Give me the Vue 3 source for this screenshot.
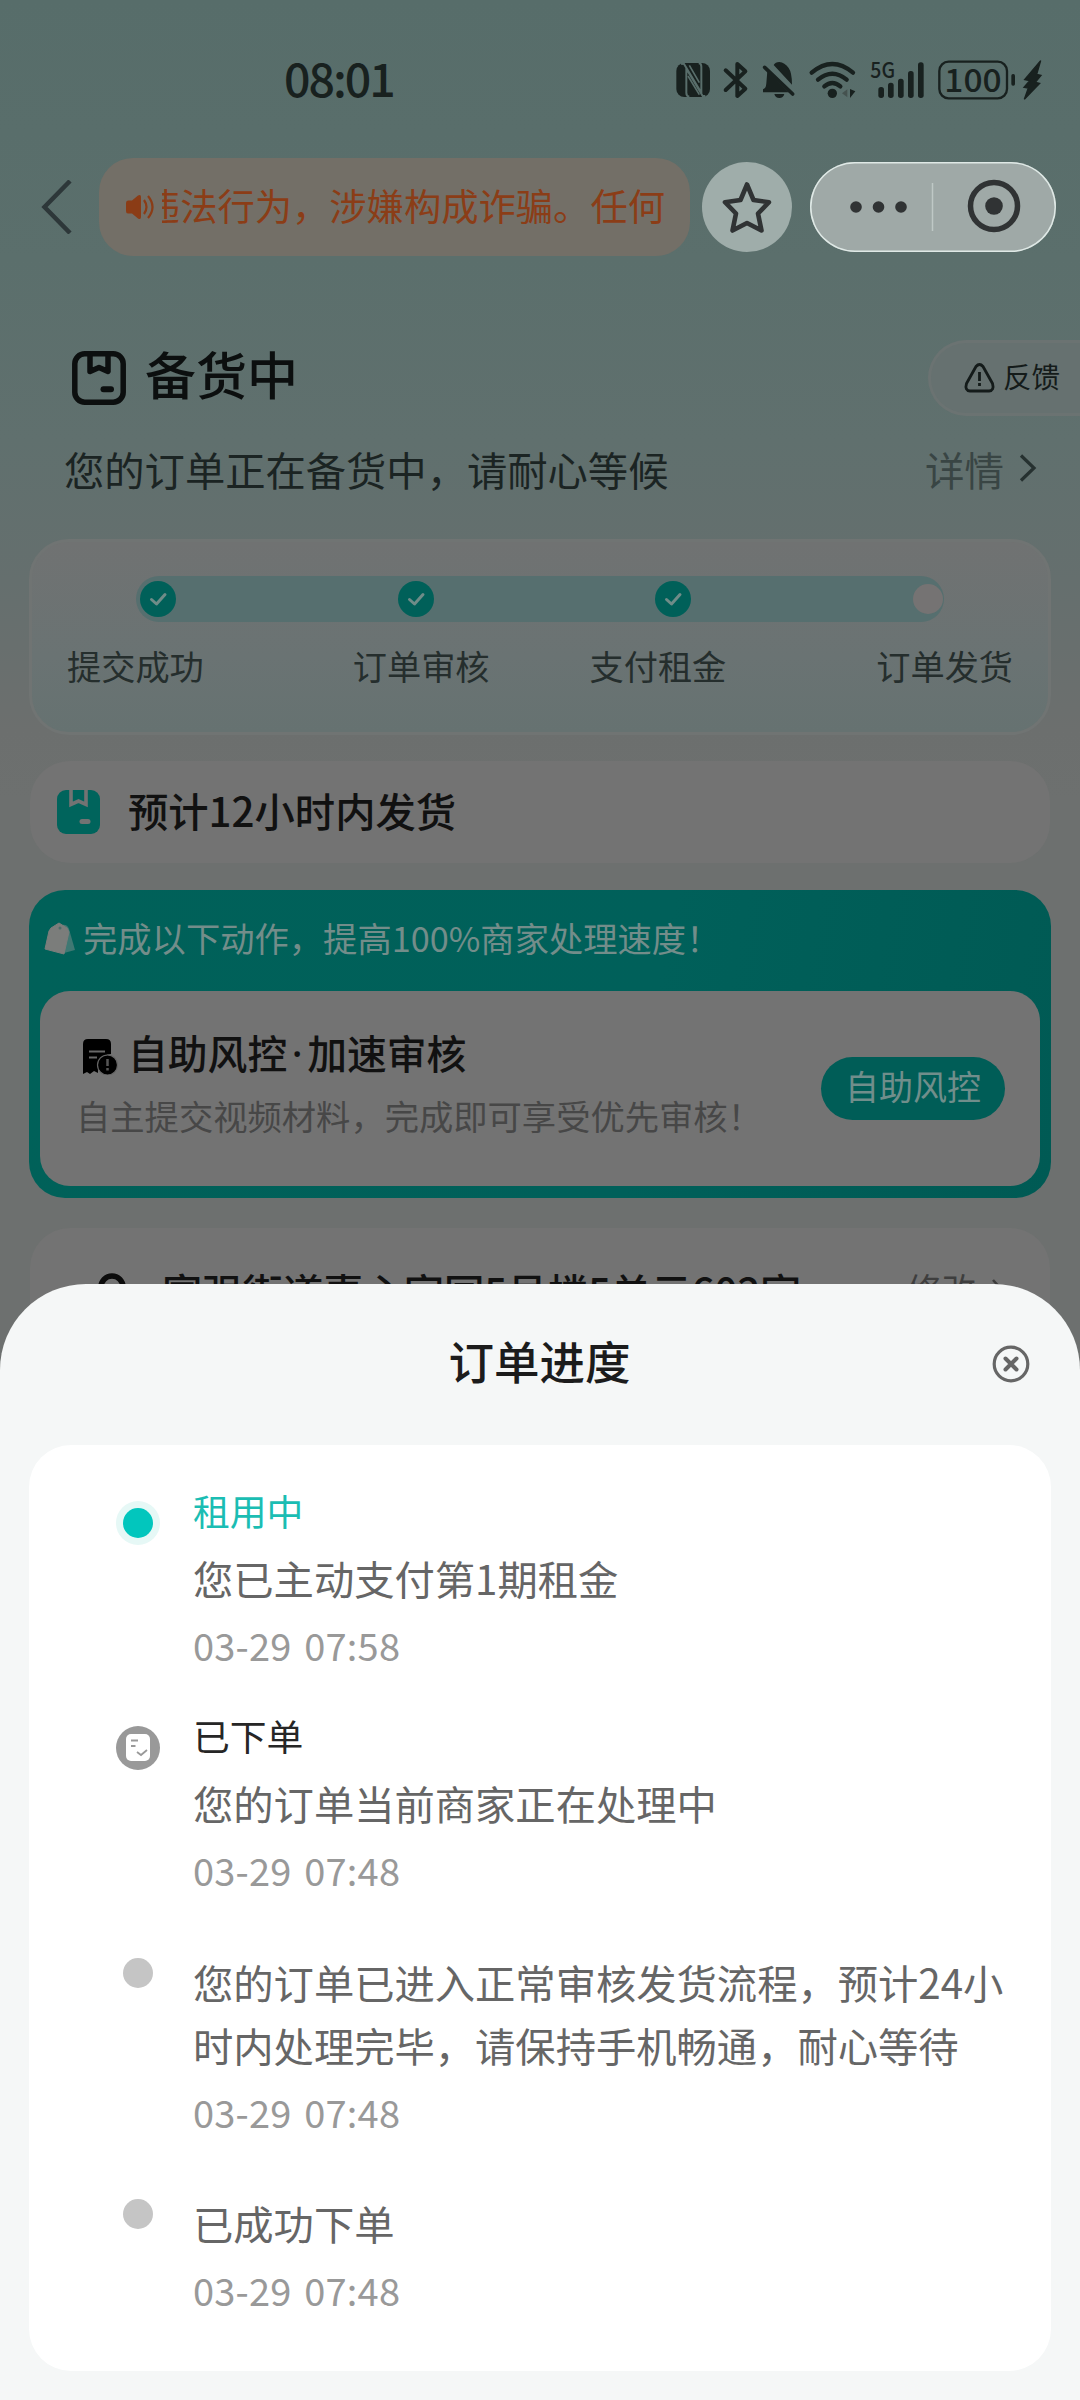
<script setup>
const notice = '违法行为，涉嫌构成诈骗。任何'
const steps = [
  { label: '提交成功', done: true },
  { label: '订单审核', done: true },
  { label: '支付租金', done: true },
  { label: '订单发货', done: false }
]
const timeline = [
  { mark: 'active', title: '租用中', text: '您已主动支付第1期租金', time: '03-29 07:58' },
  { mark: 'order', title: '已下单', text: '您的订单当前商家正在处理中', time: '03-29 07:48' },
  { mark: 'dot', text: '您的订单已进入正常审核发货流程，预计24小时内处理完毕，请保持手机畅通，耐心等待', time: '03-29 07:48' },
  { mark: 'dot', text: '已成功下单', time: '03-29 07:48' }
]
</script>

<template>
  <div class="screen">
    <header class="status">
      <span class="clock">08:01</span>
      <svg class="status-icons" viewBox="0 0 1260 270" width="420" height="90">
        <g fill="#18211f">
          <rect x="49" y="69" width="101" height="102" rx="24" />
          <path d="M63 71L72 72L124 158V80Q124 70 116 70M136 168L128 168L79 86V158Q79 169 88 170" fill="none" stroke="#596e6b" stroke-width="6" />
          <path d="M84 108L118 164M88 76L118 128" stroke="#596e6b" stroke-width="5" />
          <path d="M197 91L256 146L232 168V72L256 94L197 150" fill="none" stroke="#18211f" stroke-width="12" stroke-linecap="round" stroke-linejoin="round" />
          <path d="M341 75Q346 66 358 66Q374 68 386 84Q396 98 396 134ZM322 94L386 157H309V148Q318 146 319 130ZM343 162H373Q370 174 358 174Q346 174 343 162Z" />
          <path d="M314 82L398 162" stroke="#18211f" stroke-width="11" stroke-linecap="round" />
          <g fill="none" stroke="#18211f" stroke-width="13" stroke-linecap="round">
            <path d="M455 98Q517 46 579 98M474 119Q517 83 560 119M493 139Q517 119 541 139" />
          </g>
          <circle cx="517" cy="160" r="14" />
          <path d="M570 147L586 154L570 174Z" />
          <path d="M562 148V172L546 160Z" fill="#45524f" />
          <rect x="655" y="141" width="17" height="33" rx="8" />
          <rect x="684" y="128" width="17" height="46" rx="8" />
          <rect x="714" y="116" width="17" height="58" rx="8" />
          <rect x="744" y="93" width="17" height="81" rx="8" />
          <rect x="774" y="67" width="17" height="107" rx="8" />
          <text x="631" y="114" font-size="64" font-weight="500" textLength="74" lengthAdjust="spacingAndGlyphs">5G</text>
          <rect x="838" y="65" width="203" height="110" rx="28" fill="none" stroke="#18211f" stroke-width="7" />
          <rect x="1054" y="102" width="11" height="35" rx="5" />
          <text x="853" y="155" font-size="97" font-weight="500" textLength="172" lengthAdjust="spacingAndGlyphs">100</text>
          <path d="M1142 62L1094 119L1109 122L1092 142L1105 144L1093 178L1139 130L1126 127L1143 106L1130 103Z" stroke="#18211f" stroke-width="4" />
        </g>
      </svg>
    </header>

    <nav class="nav">
      <svg class="back" width="32" height="54" viewBox="0 0 32 54" fill="none" stroke="#2d3739" stroke-width="4.500">
        <path d="M29 1L3.500 27L29 53" />
      </svg>
      <div class="notice">
        <svg width="28" height="26" viewBox="0 0 28 26">
          <path d="M2 6.500H6L12 1.500Q15 0 15 3V23Q15 26 12 24.500L6 19.500H2Q0 19.500 0 17V9Q0 6.500 2 6.500Z" fill="#8b3c16" />
          <path d="M18 6Q23 13 18 20M22 2Q31 13 22 24" fill="none" stroke="#8b3c16" stroke-width="2.200" />
        </svg>
        <div class="marquee"><span>{{ notice }}</span></div>
      </div>
      <div class="fav">
        <svg width="52" height="54" viewBox="0 0 52 54" fill="none" stroke="#303334" stroke-width="4.600" stroke-linejoin="round">
          <path d="M26 4.500L32.500 20L48 22.200L37 33.500L40.500 50.500L26 43L11.500 50.500L15 33.500L4 22.200L19.500 20Z" />
        </svg>
      </div>
      <div class="capsule">
        <svg width="246" height="90" viewBox="0 0 246 90">
          <g fill="#303334">
            <circle cx="46" cy="45" r="5.800" /><circle cx="68.500" cy="45" r="5.800" /><circle cx="91" cy="45" r="5.800" />
            <circle cx="184" cy="44" r="8.800" />
          </g>
          <circle cx="184" cy="44" r="23.500" fill="none" stroke="#303334" stroke-width="5.500" />
          <path d="M122.500 21V69" stroke="#bfc8c6" stroke-width="1.500" />
        </svg>
      </div>
    </nav>

    <section class="heading">
      <svg width="54" height="54" viewBox="0 0 54 54" fill="none" stroke="#0c0f0f" stroke-width="5.500" stroke-linejoin="round" stroke-linecap="round">
        <rect x="2.800" y="2.800" width="48.400" height="48.400" rx="10" />
        <path d="M18 4V20.500L27 16.500L36 20.500V4" stroke-linecap="butt" />
        <path d="M31.500 38.200H39" stroke-width="6" />
      </svg>
      <h1>备货中</h1>
      <div class="feedback">
        <svg width="31" height="30" viewBox="0 0 31 30" fill="none" stroke="#141b1a" stroke-width="2.800" stroke-linejoin="round">
          <path d="M12 3.500Q15.500 -0.500 19 3.500L28.500 20.500Q30.500 27.500 25 28H6Q0.500 27.500 2.500 20.500Z" />
          <path d="M15.500 9V18M15.500 20V23" />
        </svg>
        <span>反馈</span>
      </div>
    </section>

    <section class="sub">
      <span>您的订单正在备货中，请耐心等候</span>
      <span class="detail">详情
        <svg width="18" height="28" viewBox="0 0 18 28" fill="none" stroke="#263130" stroke-width="3.200"><path d="M2 1.500L15 14L2 26.500" /></svg>
      </span>
    </section>

    <section class="progress">
      <div class="bar">
        <i v-for="s in steps" :key="s.label" :class="{ done: s.done }">
          <svg v-if="s.done" width="36" height="36" viewBox="0 0 36 36" fill="none" stroke="#6f8c88" stroke-width="3" stroke-linecap="round" stroke-linejoin="round"><path d="M11.500 18.500L16.500 23L25 13.500" /></svg>
        </i>
      </div>
      <div class="labels"><span v-for="s in steps" :key="s.label">{{ s.label }}</span></div>
    </section>

    <section class="eta">
      <svg width="43" height="44" viewBox="0 0 43 44">
        <rect width="43" height="44" rx="9" fill="#00645c" />
        <path d="M14 0V14.500L21.500 11L29 14.500V0" fill="none" stroke="#737373" stroke-width="3.600" />
        <path d="M25 31.500H31" stroke="#737373" stroke-width="5" stroke-linecap="round" />
      </svg>
      <b>预计12小时内发货</b>
    </section>

    <section class="boost">
      <div class="boost-head">
        <svg width="32" height="33" viewBox="0 0 32 33">
          <path d="M18 3Q23 2 25 7L31 28L20 31Z" fill="#3f7873" />
          <path d="M7 6L15 1L23 6L25 10L20 32L1 27L5 9Z" fill="#7b7d7b" stroke="#7b7d7b" stroke-linejoin="round" />
          <circle cx="16" cy="6" r="1.500" fill="#4e6d69" />
        </svg>
        <span>完成以下动作，提高100%商家处理速度！</span>
      </div>
      <div class="boost-card">
        <div class="boost-copy">
          <div class="boost-title">
            <svg width="35" height="36" viewBox="0 0 35 36">
              <path d="M5 0H23Q28 0 28 5V15Q14 16 15 34L11 32L7 35L4 33L0 35V5Q0 0 5 0Z" />
              <path d="M6 12.500H22M6 18.500H14" stroke="#686868" stroke-width="2.200" />
              <circle cx="24.500" cy="26" r="10" stroke="#666" stroke-width="1.200" />
              <path d="M24.500 20V27M24.500 29V31.500" stroke="#555" stroke-width="2.500" />
            </svg>
            <b>自助风控<i>·</i>加速审核</b>
          </div>
          <p>自主提交视频材料，完成即可享受优先审核！</p>
        </div>
        <button>自助风控</button>
      </div>
    </section>

    <section class="address">
      <svg width="28" height="36" viewBox="0 0 28 36"><path d="M14 3A11 11 0 0 0 3 14Q3 22 14 33Q25 22 25 14A11 11 0 0 0 14 3Z" fill="none" stroke="#0c0c0c" stroke-width="5.500" /></svg>
      <b>富强街道惠心家园5号楼5单元602室</b>
      <span>修改</span>
      <svg class="go" width="12" height="22" viewBox="0 0 12 22" fill="none" stroke="#3c3c3c" stroke-width="2.600"><path d="M1 1L10 11L1 21" /></svg>
    </section>

    <section class="sheet">
      <div class="sheet-head">
        <h2>订单进度</h2>
        <svg class="close" width="38" height="38" viewBox="0 0 38 38" fill="none" stroke="#666" stroke-width="3.200">
          <circle cx="19" cy="19" r="16.800" />
          <path d="M13.500 13.500L24.500 24.500M24.500 13.500L13.500 24.500" stroke-width="4" stroke-linecap="round" />
        </svg>
      </div>
      <ol class="timeline">
        <li v-for="(t, i) in timeline" :key="i" :class="t.mark">
          <div class="mark">
            <svg v-if="t.mark === 'order'" width="44" height="44" viewBox="0 0 44 44">
              <circle cx="22" cy="22" r="22" fill="#999" />
              <rect x="10" y="8" width="24" height="27" rx="5" fill="#fff" />
              <path d="M15 14.500H22M15 20H19.500M21 26L25 29L31 24" fill="none" stroke="#999" stroke-width="1.800" />
            </svg>
            <i v-else></i>
          </div>
          <div class="body">
            <h3 v-if="t.title">{{ t.title }}</h3>
            <p>{{ t.text }}</p>
            <time>{{ t.time }}</time>
          </div>
        </li>
      </ol>
    </section>
  </div>
</template>

<style>
body { background: #6d706f; }
</style>

<style scoped>
* { box-sizing: border-box; margin: 0; padding: 0; }
svg { display: block; flex: none; }
.screen {
  position: relative; width: 1080px; height: 2400px; overflow: hidden;
  font-family: "Noto Sans CJK SC", "Noto Sans", sans-serif;
  background: linear-gradient(#576d6a 0, #5b6f6c 260px, #60706e 440px, #656f6e 580px, #6c6f6e 730px, #6d706f 800px);
}
.status { display: flex; height: 158px; padding: 40px 0 0 284px; align-items: flex-start; }
.clock { width: 376px; font-size: 46.500px; font-weight: 500; line-height: 74px; letter-spacing: -2px; color: #18211f; }
.nav { display: flex; height: 98px; align-items: center; padding-left: 41px; }
.back { margin-right: 26px; }
.notice { display: flex; width: 591px; height: 98px; align-items: center; border-radius: 34px; background: #736f67; padding-left: 27px; }
.marquee { display: flex; justify-content: flex-end; width: 503px; margin-left: 8px; overflow: hidden; white-space: nowrap; font-size: 37.300px; line-height: 60px; padding-bottom: 5px; color: #8b3d17; }
.fav { display: flex; width: 90px; height: 90px; margin-left: 12px; border-radius: 50%; background: #9fadaa; align-items: center; justify-content: center; }
.capsule { display: flex; width: 246px; height: 90px; margin-left: 18px; border-radius: 45px; background: #9fa9a7; box-shadow: inset 0 0 0 1.500px #dfe9e6; }
.heading { display: flex; height: 76px; margin-top: 84px; padding-left: 72px; align-items: center; }
h1 { margin-left: 19px; padding-bottom: 9px; font-size: 51px; font-weight: 500; line-height: 67px; color: #0c0f0f; }
.feedback { display: flex; width: 152px; height: 76px; margin-left: auto; padding-left: 33px; align-items: center; gap: 8px; border: 3px solid #6b7372; border-right: 0; border-radius: 38px 0 0 38px; background: #667170; font-size: 28.500px; color: #141b1a; }
.feedback span { padding-bottom: 5px; white-space: nowrap; }
.feedback svg { margin-bottom: 1px; }
.sub { display: flex; height: 60px; margin-top: 24px; padding: 0 43px 4px 64px; align-items: center; justify-content: space-between; font-size: 40.300px; color: #1b2423; }
.detail { display: flex; align-items: center; gap: 15px; font-size: 39.500px; color: #394544; }
.progress { width: 1022px; height: 196px; margin: 39px 0 0 29px; padding-top: 34px; border: 3px solid #707473; border-radius: 40px; background: linear-gradient(#707272, #6a7373 60%, #667271); }
.bar { display: flex; width: 808px; height: 46px; margin-left: 104px; padding: 0 1px 0 4px; border-radius: 23px; background: #566f6f; align-items: center; justify-content: space-between; }
.bar i { width: 30px; height: 30px; border-radius: 50%; background: #757373; }
.bar i.done { width: 36px; height: 36px; background: #006059; }
.labels { display: flex; padding: 15px 35px 0; font-size: 34.200px; line-height: 57px; color: #252e2d; white-space: nowrap; }
.labels span:nth-child(2) { margin-left: 149px; }
.labels span:nth-child(3) { margin-left: 100px; }
.labels span:nth-child(4) { margin-left: 150px; }
.eta { display: flex; width: 1020px; height: 102px; margin: 26px 0 0 30px; padding-left: 27px; align-items: center; border-radius: 40px; background: #737373; }
b { font-weight: 500; font-size: 40.300px; color: #111; white-space: nowrap; }
.eta b { margin-left: 28px; padding-bottom: 6px; }
.boost { width: 1022px; height: 308px; margin: 27px 0 0 29px; padding: 0 11px; border-radius: 36px; background: linear-gradient(100deg, #006159, #00605a 60%, #005a54); }
.boost-head { display: flex; height: 101px; padding: 0 0 4px 4px; align-items: center; gap: 7px; font-size: 34.300px; color: #738d8a; white-space: nowrap; }
.boost-head span { padding-bottom: 3px; }
.boost-card { display: flex; height: 195px; padding: 30px 35px 0 36px; border-radius: 30px; background: #737373; }
.boost-title { display: flex; height: 68px; padding-left: 7px; align-items: center; gap: 10px; }
.boost-title svg { margin-top: 3px; }
.boost-title b { display: flex; padding-bottom: 5px; font-size: 39.800px; }
.boost-title i { display: flex; width: 20px; justify-content: center; font-family: "Noto Sans", sans-serif; font-style: normal; line-height: 60px; }
.boost-copy p { font-size: 34.300px; line-height: 53px; color: #474747; white-space: nowrap; }
button { width: 184px; height: 63px; margin: 36px 0 0 auto; border: 0; border-radius: 32px; background: #005d57; font-family: inherit; font-size: 34px; line-height: 55px; padding-bottom: 7px; color: #708e8b; }
.address { display: flex; width: 1020px; height: 150px; margin: 30px 0 0 30px; padding: 33px 44px 0 68px; border-radius: 40px; background: #737373; align-items: flex-start; }
.address svg { margin-top: 12px; }
.address b { margin-left: 36px; line-height: 59px; }
.address span { margin-left: auto; font-size: 34.500px; line-height: 54px; color: #3e3e3e; }
.address .go { margin: 18px 2px 0 16px; }
.sheet { position: absolute; left: 0; bottom: 0; width: 1080px; height: 1116px; border-radius: 86px 86px 0 0; background: #f5f7f7; }
.sheet-head { display: grid; height: 161px; padding-right: 50px; grid-template-columns: 87px 1fr 38px; align-items: center; }
.close { margin-bottom: 1px; }
h2 { grid-column: 2; padding-bottom: 9px; font-size: 45.500px; font-weight: 500; line-height: 66px; text-align: center; color: #1c1c1c; }
.timeline { width: 1022px; height: 926px; margin-left: 29px; padding-top: 35px; border-radius: 42px; background: #fff; list-style: none; }
li { display: flex; padding: 20px 0 29px 87px; }
li.active, li.order { padding-top: 0; padding-bottom: 30px; }
.mark { display: flex; width: 44px; margin-right: 33px; justify-content: center; align-items: flex-start; }
.mark i { width: 30px; height: 30px; margin-top: 8px; border-radius: 50%; background: #c5c5c5; }
.active .mark i { margin-top: 28px; background: #02c6bd; box-shadow: 0 0 0 7px #e6f8f6; }
.mark svg { margin-top: 21px; }
h3 { height: 66px; font-size: 36.800px; font-weight: 400; line-height: 60px; color: #262626; }
.active h3 { color: #1bbdb3; }
.body { width: 826px; }
.body p { font-size: 40.300px; line-height: 63px; color: #666; }
time { display: block; margin-top: 6px; font-size: 38px; line-height: 60px; letter-spacing: .2px; word-spacing: 4px; color: #999; }
</style>
